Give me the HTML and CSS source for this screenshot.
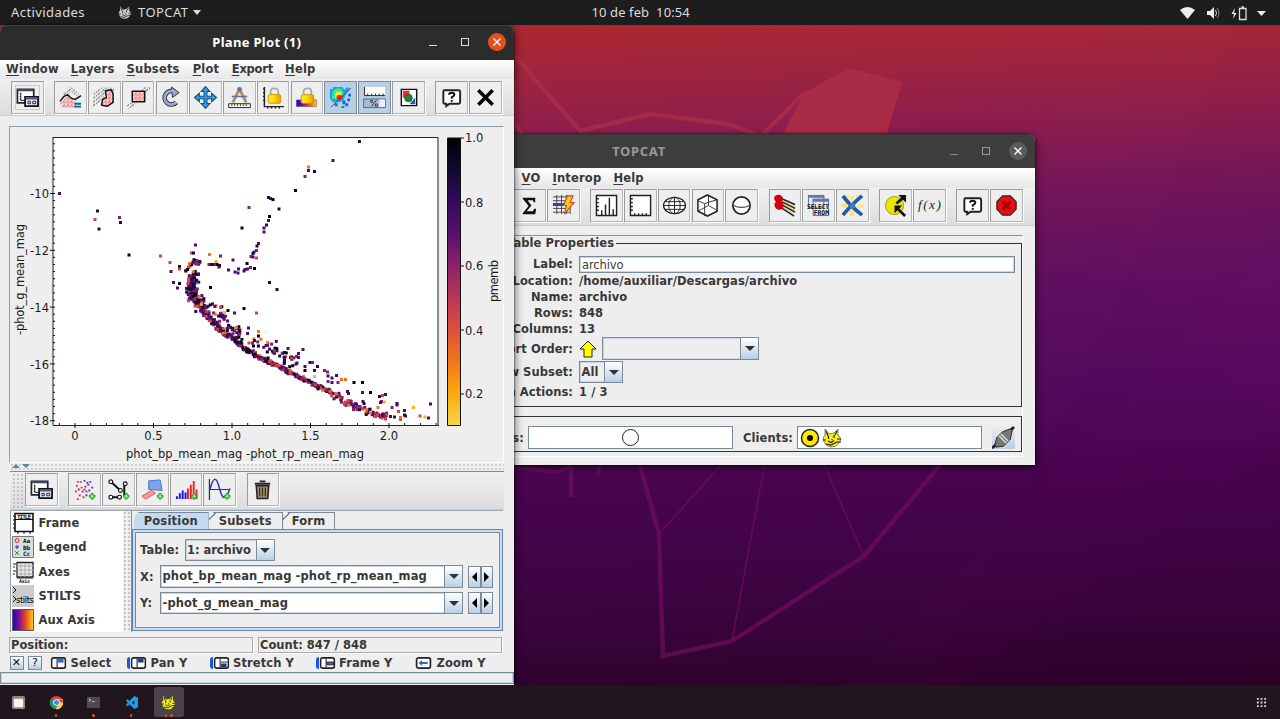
FILE: index.html
```html
<!DOCTYPE html>
<html lang="es">
<head>
<meta charset="utf-8">
<title>TOPCAT</title>
<link rel="stylesheet" href="styles.css">
</head>
<body>
<svg class="defs" width="0" height="0">
  <defs>
    <pattern id="red-dots" width="4" height="4" patternUnits="userSpaceOnUse"><path fill="#ee4350" d="M0 0h1.400v1.400h-1.400zM2 1h1.300v1.300h-1.300zM.8 2.700h1.300v1.300h-1.300z"/></pattern>
    <pattern id="grey-dots" width="5" height="4" patternUnits="userSpaceOnUse"><path fill="#444" d="M0 0h1.200v1.200h-1.200zM3 1.500h1.200v1.200h-1.200zM1 3h1v1h-1z"/></pattern>
    <linearGradient id="aux"><stop offset="0" stop-color="#1a00d8"/><stop offset=".3" stop-color="#7a1090"/><stop offset=".6" stop-color="#e04030"/><stop offset="1" stop-color="#ffd800"/></linearGradient>
    <linearGradient id="gold"><stop offset="0" stop-color="#ffe640"/><stop offset=".5" stop-color="#ffd800"/><stop offset="1" stop-color="#e0a000"/></linearGradient>
    <linearGradient id="inferno" x2="0" y2="1"><stop offset="0" stop-color="#000004"/><stop offset=".11" stop-color="#110a30"/><stop offset=".22" stop-color="#320a5e"/><stop offset=".33" stop-color="#57106e"/><stop offset=".44" stop-color="#8a226a"/><stop offset=".56" stop-color="#bc3754"/><stop offset=".67" stop-color="#dd513a"/><stop offset=".78" stop-color="#f37819"/><stop offset=".88" stop-color="#fca50a"/><stop offset="1" stop-color="#f6d746"/></linearGradient>
    <symbol id="windows" viewBox="0 0 24 24"><path d="M1.500 3.500h17v14h-17z" fill="#fff" stroke="#223" stroke-width="1.800"/><path d="M2 3h16v2.500H2z" fill="#446"/><path d="M5 7v8h5M4 8h1M4 11h1M4 14h1" fill="none" stroke="#111"/><path d="M9.500 11.500h13.500v9.500H9.500z" fill="#dde6f2" stroke="#112" stroke-width="1.900"/><path d="M10 11.500h12.500v2.500H10z" fill="#557"/><path d="M12.500 16h2.500v2.500h-2.500zM17.500 16h3v2.500h-3z" fill="#fff" stroke="#223"/></symbol>
    <symbol id="help" viewBox="0 0 24 24"><path d="M4.500 4.500h15q1.500 0 1.500 1.500v11q0 1.500-1.500 1.500H10L6.500 21v-2.500h-2Q3.500 18.500 3.500 17V6q0-1.500 1-1.500z" fill="#fff" stroke="#222" stroke-width="2"/><path d="M9.500 9Q9.500 7 12.200 7Q15 7 15 9.200Q15 10.600 12.300 11.600v1.700M12.300 14.500v2" fill="none" stroke="#111" stroke-width="2"/></symbol>
    <symbol id="plus" viewBox="0 0 8 8"><path d="M3 1h2v2h2v2H5v2H3V5H1V3h2z" fill="#8f8" stroke="#16a016" stroke-width="1"/></symbol>
    <symbol id="cat" viewBox="0 0 20 20"><path d="M3 1l4 5 5-1 4-4v6l3 4-2 4q-3 4.500-8 4-5-.5-7-5l-1-4 2-3z"/><path d="M4 3l2 5M15 3l-2 4M6.500 8v3M12 7v3M6 13l3 1.500 3-2M4 16l5 1 6-3M1 12h3M15 11h4M15 14h4M10 11v1" stroke="#222" stroke-width="1.200" fill="none"/></symbol>
    <symbol id="mouse" viewBox="0 0 17 13"><rect x="1" y="1" width="15" height="11" rx="2" fill="#fff" stroke="#222" stroke-width="1.800"/><path d="M7 2v9" stroke="#222" stroke-width="1.200"/></symbol>
  </defs>
</svg>

<div class="desktop">
  <svg class="wallpaper" viewBox="0 0 1280 719" fill="none">
    <path d="M1040 465 1165 200 1235 25h45v660H925z" fill="#30003a" opacity=".02"/>
    <path d="M845 685 1280 240v200L960 685z" fill="#a02070" opacity=".03"/>
    <path d="M1115 255l85-115 80 120v170z" fill="#a02070" opacity=".03"/>
    <path d="M783 133 805 92l44-24 53 14-15 51z" fill="#aa2b45"/>
    <g stroke="#b2304c" stroke-opacity=".6" stroke-width="4.500"><path d="M514 55 580 131l70-17 78 10 32 12M761 136l44-44M514 82v38l10 20" /></g>
    <g stroke="#760e62" stroke-opacity=".62" stroke-width="4.500"><path d="M639 462l20 72 4 122 69-15 132-85 76-91"/><path d="M514 468l45 4 14-7M571 465v32M599 465v10" stroke-width="4"/><path d="M659 534l63-70M765 462 732 641M823 462l41 94" stroke-width="1.700"/></g>
  </svg>

  <header class="topbar">
    <span class="activities">Actividades</span>
    <span class="app"><svg class="ic-cat" fill="#ccc"><use href="#cat"/></svg><span>TOPCAT</span><i class="caret"></i></span>
    <span class="clock">10 de feb&nbsp; 10:54</span>
    <svg class="tray" viewBox="0 0 90 16"><path d="M0 5Q7.500-1 15 5L7.500 14z" fill="#eee"/><path d="M27 6h3l4-4v12l-4-4h-3z" fill="#eee"/><path d="M35.500 5q2 3 0 6" fill="none" stroke="#ddd"/><path d="M37 3q4 5 0 10" fill="none" stroke="#888"/><path d="M55 3l-3.500 6h2.500l-1 5 3.500-6h-2.500z" fill="#eee"/><path d="M59.500 3.500h6.500v11h-6.500zM61.500 2h2.500" fill="none" stroke="#ddd" stroke-width="1.300"/><path d="M77 6h9l-4.500 5z" fill="#eee"/></svg>
  </header>

  <section class="window main-window">
    <div class="titlebar"><h2>TOPCAT</h2><div class="controls"><i class="min"></i><i class="max"></i><i class="close"><svg viewBox="0 0 8 8"><path d="M.5.500l7 7M7.500.500l-7 7"/></svg></i></div></div>
    <nav class="menu"><span><u>V</u>O</span><span><u>I</u>nterop</span><span><u>H</u>elp</span></nav>
    <div class="toolbar">
      <button><svg viewBox="0 0 24 24"><path d="M5 4h13v4.500h-1.500L15.500 6.500H10l4 5.500-5 6h6.500l1.500-2.500H19L18 21H5v-1l6-7.500L5 5z" fill="#111"/></svg></button>
      <button><svg viewBox="0 0 24 24"><path d="M1 3h18M1 7h18M1 15h17M1 19h17M5 1v20M10 1v20M15 1v20M19 1v20" stroke="#444"/><path d="M1 9.500h17v3H1z" fill="#3246a0"/><path d="M16 2h6l-3 7h4L13 21l2-9h-3z" fill="#ffc819" stroke="#c43" stroke-width="1.200"/></svg></button>
      <button class="gap"><svg viewBox="0 0 24 24"><path d="M1.500 1.500h21v21h-21z" fill="#fff" stroke="#222" stroke-width="1.500"/><path d="M2 5h2M2 9h2M2 13h2M2 17h2M7 22v-5M11 22V11M15 22V4M19 22v-6" stroke="#222" stroke-width="1.500"/></svg></button>
      <button><svg viewBox="0 0 24 24"><path d="M1.500 1.500h21v21h-21z" fill="#fff" stroke="#222" stroke-width="1.500"/><path d="M2 5h2M2 9h2M2 13h2M2 17h2M6 22v-2M10 22v-2M14 22v-2M18 22v-2" stroke="#222" stroke-width="1.500"/></svg></button>
      <button><svg viewBox="0 0 24 24"><g fill="none" stroke="#222"><ellipse cx="12" cy="12" rx="11.500" ry="8.500" fill="#fff" stroke-width="1.500"/><ellipse cx="12" cy="12" rx="6" ry="8.500"/><path d="M12 3v18M1 12h22M3 8h18M3 16h18"/></g></svg></button>
      <button><svg viewBox="0 0 24 24"><path d="M12 1l10 5v12l-10 5-10-5V6z" fill="#fff" stroke="#222" stroke-width="1.600"/><path d="M2 18l11-6 9 5M13 12V1M2 7l7 3 13-4M9 10v13" fill="none" stroke="#333"/></svg></button>
      <button><svg viewBox="0 0 24 24"><circle cx="12" cy="12" r="9" fill="#fff" stroke="#222" stroke-width="1.800"/><path d="M3.500 12q8.500 4 17 0" fill="none" stroke="#444" stroke-width="1.200"/></svg></button>
      <button class="gap"><svg viewBox="0 0 24 24"><path d="M9 5l14 6M9 8l14 7M9 11l14 8M8 14l14 9" stroke="#222" stroke-width="1.600"/><path d="M9 6.500l14 6.500M9 9.500l14 7.500M9 12.500l13 8.500" stroke="#dbc46a"/><path d="M2 2q5-3 8 1 1 3-1 5 4 3 1 7-3 3-7 0-3-4 0-7Q0 5 2 2z" fill="#d00010"/></svg></button>
      <button><svg viewBox="0 0 24 24"><path d="M1.500 1.500h16v13h-16zM6.500 5.500h16v17h-16z" fill="#e5e8f0" stroke="#5369a0"/><path d="M1 1h17v3H1zM6 5h17v3H6z" fill="#5e78ae"/><text x="0" y="16" textLength="23" lengthAdjust="spacingAndGlyphs" class="tiny sql">SELECT</text><text x="7" y="22" textLength="16" lengthAdjust="spacingAndGlyphs" class="tiny sql">FROM</text></svg></button>
      <button><svg viewBox="0 0 24 24"><path d="M4 2h4v4H4zM16 1h5v4h-5zM1 10h5v4H1zM18 11h5v3h-5zM10 2h3v5h-3zM9 17h5v6H9z" fill="#ffe050" opacity=".8"/><path d="M2 2q7 10 20 20M22 2Q12 10 2 22" stroke="#2459a8" stroke-width="3.800" fill="none"/><circle cx="12" cy="12" r="3" fill="#4679c0"/></svg></button>
      <button class="gap"><svg viewBox="0 0 24 24"><circle cx="11" cy="12" r="9.500" fill="#e8e600" stroke="#a7a000"/><path d="M13 10l8-7M14 15l8 8" stroke="#111" stroke-width="2.800"/><path d="M15 1h8v8zM11 12h8l-8 8z" fill="#111"/></svg></button>
      <button><svg viewBox="0 0 24 24"><text x="0" y="16" textLength="24" class="func">f(x)</text></svg></button>
      <button class="gap"><svg><use href="#help"/></svg></button>
      <button><svg viewBox="0 0 24 24"><path d="M8 2h8l6 6v8l-6 6H8l-6-6V8z" fill="#e01218" stroke="#501010" stroke-width="1.300"/><path d="M8 8l8 8M16 8l-8 8" stroke="#a80008" stroke-width="3.500"/></svg></button>
    </div>
    <div class="info">
      <fieldset>
        <legend>Table Properties</legend>
        <dl>
          <dt>Label:</dt><dd><span class="field">archivo</span></dd>
          <dt>Location:</dt><dd>/home/auxiliar/Descargas/archivo</dd>
          <dt>Name:</dt><dd>archivo</dd>
          <dt>Rows:</dt><dd>848</dd>
          <dt>Columns:</dt><dd>13</dd>
          <dt>Sort Order:</dt><dd><svg class="up" viewBox="0 0 18 18"><path d="M9 1l8 8h-4v8H5V9H1z" fill="#ff0" stroke="#222"/></svg><span class="combo sort"><span></span><b></b></span></dd>
          <dt>Row Subset:</dt><dd><span class="combo all"><span>All</span><b></b></span></dd>
          <dt>Activation Actions:</dt><dd>1 / 3</dd>
        </dl>
      </fieldset>
      <div class="samp">
        <span class="msg">Messages:</span><span class="box one"><i class="ring"></i></span>
        <span class="clients">Clients:</span><span class="box two"><svg viewBox="0 0 20 20"><circle cx="10" cy="10" r="8.500" fill="#ffe800" stroke="#222" stroke-width="1.500"/><circle cx="10" cy="10" r="3" /></svg><svg viewBox="0 0 20 20" fill="#f5ee20" stroke="#333" stroke-width=".6"><use href="#cat"/></svg></span>
        <svg class="plug" viewBox="0 0 24 24"><path d="M0 23l6-5M19 5l4-4" stroke="#222" stroke-width="3"/><path d="M5 12l6-6 8-3 2 2-2 9-7 7-8 1-1-3z" fill="#777" stroke="#222"/><path d="M9 8l8 8M7 10l8 8" stroke="#ddd" stroke-width="1.500"/></svg>
      </div>
    </div>
  </section>

  <section class="window plot-window">
    <div class="titlebar"><h2>Plane Plot (1)</h2><div class="controls"><i class="min"></i><i class="max"></i><i class="close"><svg viewBox="0 0 8 8"><path d="M.5.500l7 7M7.500.500l-7 7"/></svg></i></div></div>
    <nav class="menu"><span><u>W</u>indow</span><span><u>L</u>ayers</span><span><u>S</u>ubsets</span><span><u>P</u>lot</span><span class="export"><u>E</u>xport</span><span><u>H</u>elp</span></nav>
    <div class="toolbar">
      <button class="focus"><svg><use href="#windows"/></svg></button>
      <button class="gap"><svg viewBox="0 0 24 24"><path d="M3 8 12 0l9 8-3 3-5-5-7 5z" fill="url(#grey-dots)"/><path d="M1 17l8-7 8 7v6H3z" fill="url(#red-dots)"/><path d="M1 16l4-5 4-2 4 4 4 1 6-4" fill="none" stroke="#111" stroke-width="1.500"/><path d="M16 18.500h7M16 21.500h7" stroke="#076a85" stroke-width="2"/></svg></button>
      <button><svg viewBox="0 0 24 24"><path d="M1 7l9-6 12 1v4l-9 3-4 6-7 6H0z" fill="url(#grey-dots)"/><path d="M13 5l6-1 2 4v9l-6 4-6-1 1-6 4-2z" fill="#fdd"/><path d="M13 5l6-1 2 4v9l-6 4-6-1 1-6 4-2z" fill="url(#red-dots)" stroke="#111" stroke-width="1.500"/></svg></button>
      <button><svg viewBox="0 0 24 24"><path d="M16 1h8v4l-8 5zM0 20l7-5 2 4-7 5z" fill="url(#grey-dots)"/><path d="M5.500 5.500h13v11h-13z" fill="#fdd"/><path d="M5.500 5.500h13v11h-13z" fill="url(#red-dots)" stroke="#111" stroke-width="1.500"/></svg></button>
      <button><svg viewBox="0 0 24 24"><path d="M17 17a7 7 0 1 1-2-11" fill="none" stroke="#334" stroke-width="5"/><path d="M12 1l8 6-7 5z" fill="#99a0d4" stroke="#334"/><path d="M17 17a7 7 0 1 1-2-11" fill="none" stroke="#a0a6d8" stroke-width="3"/></svg></button>
      <button><svg viewBox="0 0 24 24"><path d="M12 .7l4.500 5h-3v5h5V7.500l5 4.500-5 4.500v-3.200h-5v5h3L12 23.300l-4.500-5h3v-5h-5v3.200L.5 12l5-4.500v3.200h5v-5h-3z" fill="#29a4ec" stroke="#105078" stroke-width="1.200"/></svg></button>
      <button><svg viewBox="0 0 24 24"><path d="M11 5 5 17M13 5l6 12" stroke="#b8914b" stroke-width="3"/><path d="M4 11h16" stroke="#66b" stroke-width="1.500"/><circle cx="12" cy="3.500" r="2.500" fill="#6670b0"/><path d="M.7 18.500h22.600v4H.7z" fill="#fff" stroke="#222"/><path d="M4 19v2M7 19v2M10 19v2M13 19v2M16 19v2M19 19v2" stroke="#222"/></svg></button>
      <button><svg viewBox="0 0 24 24"><path d="M2.500 1v20.500H23M1 3h2M1 7h2M1 11h2M1 15h2M6 22v1.500M10 22v1.500M14 22v1.500M18 22v1.500" stroke="#222" stroke-width="1.500" fill="none"/><path d="M9 9V6q0-3.500 4-3.500t4 3.500v3" fill="none" stroke="#aaa" stroke-width="2"/><rect x="6.500" y="9" width="13" height="9" rx="1.500" fill="url(#gold)" stroke="#c89500"/></svg></button>
      <button><svg viewBox="0 0 24 24"><path d="M1.500 14.500h21v7h-21z" fill="url(#aux)" stroke="#444" stroke-width=".5"/><path d="M9 9V6q0-3.500 4-3.500t4 3.500v3" fill="none" stroke="#aaa" stroke-width="2"/><rect x="6.500" y="9" width="13" height="9" rx="1.500" fill="url(#gold)" stroke="#c89500"/></svg></button>
      <button class="on"><svg viewBox="0 0 24 24"><path d="M1 3h3V1h10l2 3 3-3 3 2-4 5-3 7-4 2H4L1 13z" fill="#10a9f4"/><path d="M4 5q5-5 10-1l1 5-5 6-7-2z" fill="#38e68d"/><path d="M7 6h6v6H6z" fill="#ffe72b"/><path d="M8 10l4-1 3 2-3 4-4-1z" fill="#f32810"/><path d="M2 22l21-20" stroke="#333" stroke-width=".8"/><path d="M14 15h3v3h3v3h-3v-2h-3zM19 13h3v3h-3zM6 18h3v3H6zM20 8h3v3h-3zM13 21h3v2h-3z" fill="#1268e8"/></svg></button>
      <button class="on"><svg viewBox="0 0 24 24"><path d="M1 1h22v9H1z" fill="#fff"/><path d="M1.500 1v9H23M5 10V8M9 10V8M13 10V8M17 10V8M21 10V8" stroke="#222" fill="none"/><path d="M.7 13.500h22.600v9H.7z" fill="#a9bed5" stroke="#567"/><path d="M17 14h6v8h-6z" fill="#eef"/><path d="M9 21l5-6" stroke="#222"/><circle cx="9" cy="16" r="1.300" fill="none" stroke="#222"/><circle cx="14" cy="20" r="1.300" fill="none" stroke="#222"/></svg></button>
      <button><svg viewBox="0 0 24 24"><path d="M4.500 3.500h16v17h-16z" fill="#fff" stroke="#111" stroke-width="1.500"/><path d="M6 5h7v7H6z" fill="#ef3038"/><path d="M13 19l6-7v7z" fill="#1e5fa8"/><circle cx="12" cy="12.500" r="4" fill="#188a38" stroke="#333" stroke-width=".7"/></svg></button>
      <button class="gap"><svg><use href="#help"/></svg></button>
      <button><svg viewBox="0 0 24 24"><path d="M4.500 4.500l15 15M19.500 4.500l-15 15" stroke="#000" stroke-width="3.600"/></svg></button>
    </div>

    <div class="plot">
      <svg id="chart" viewBox="10 127 493 336">
        <path d="M53 137.500h385v288H53z" fill="#fff"/>
        <g id="points"></g>
        <path d="M53 137.500h385v288M53 137v288.500h386" fill="none" stroke="#222"/>
        <path id="ticks" stroke="#111" fill="none"/>
        <path d="M447.500 138h13v287.500h-13z" fill="url(#inferno)" stroke="#111"/>
        <g text-anchor="end"><text x="49" y="198" textLength="19">-10</text><text x="49" y="255" textLength="19">-12</text><text x="49" y="311.500" textLength="19">-14</text><text x="49" y="368.500" textLength="19">-16</text><text x="49" y="425" textLength="19">-18</text></g>
        <g text-anchor="middle"><text x="75" y="440">0</text><text x="153.500" y="440">0.5</text><text x="232" y="440">1.0</text><text x="310.500" y="440">1.5</text><text x="389" y="440">2.0</text></g>
        <g><text x="465" y="142">1.0</text><text x="465" y="206.500">0.8</text><text x="465" y="270">0.6</text><text x="465" y="334.500">0.4</text><text x="465" y="398">0.2</text></g>
        <text x="126" y="458" textLength="238">phot_bp_mean_mag -phot_rp_mean_mag</text>
        <text transform="translate(23.500 335) rotate(-90)" textLength="111">-phot_g_mean_mag</text>
        <text transform="translate(498 302) rotate(-90)" textLength="42">pmemb</text>
      </svg>
    </div>
    <div class="splitter"><i></i><i></i></div>
    <div class="toolbar layer-bar">
      <span class="grip"></span>
      <button><svg><use href="#windows"/></svg></button>
      <button class="gap"><svg viewBox="0 0 24 24"><path d="M3 7h2v2H3zM7 3h2v2H7zM2 13h2v2H2zM8 9h2v2H8zM6 17h2v2H6zM13 13h2v2h-2zM10 19h2v2h-2zM15 6h2v2h-2zM4 21h2v2H4zM4 3h2v2H4zM11 11h2v2h-2z" fill="#e33"/><path d="M11 2h2v2h-2zM17 3h2v2h-2zM12 8h2v2h-2zM19 9h2v2h-2zM9 13h2v2H9zM16 12h2v2h-2zM5 11h2v2H5zM13 17h2v2h-2zM14 4h2v2h-2z" fill="#44d"/><use href="#plus" x="16" y="15" width="8" height="8"/></svg></button>
      <button><svg viewBox="0 0 24 24"><path d="M4 4l10 9M18 7v11M4 20h9" stroke="#111" stroke-width="2"/><g fill="#fff" stroke="#111" stroke-width="1.200"><circle cx="4" cy="4" r="2"/><circle cx="14" cy="13" r="2"/><circle cx="19" cy="6" r="2"/><circle cx="4" cy="20" r="2"/><circle cx="13" cy="20" r="2"/></g><use href="#plus" x="16" y="15" width="8" height="8"/></svg></button>
      <button><svg viewBox="0 0 24 24"><path d="M8 3l12-1 2 11-14-1z" fill="#7ea2ec" stroke="#4771d4"/><path d="M1 19l10-6 4 3-10 6z" fill="#f99" stroke="#d55"/><use href="#plus" x="16" y="15" width="8" height="8"/></svg></button>
      <button><svg viewBox="0 0 24 24"><path d="M2 22v-3M5 22v-6M8 22v-9M11 22v-7" stroke="#11e" stroke-width="2"/><path d="M13.500 22v-11M16.500 22V7M19.500 22V3M22.500 22V12" stroke="#e22" stroke-width="2"/><use href="#plus" x="16" y="15" width="8" height="8"/></svg></button>
      <button><svg viewBox="0 0 24 24"><path d="M1.500 1v22M1 12h22" stroke="#333" stroke-width="1.300"/><path d="M2 12C6-3 9-1 12 11S18 24 23 11" fill="none" stroke="#33c" stroke-width="1.600"/><use href="#plus" x="16" y="15" width="8" height="8"/></svg></button>
      <button class="gap"><svg viewBox="0 0 24 24"><path d="M5.500 8h13l-1 13.500h-11z" fill="#a28b70" stroke="#222" stroke-width="1.600"/><path d="M9 10v9M12 10v9M15 10v9" stroke="#332" stroke-width="1.300"/><path d="M4 6h16M9 3.500h6" stroke="#222" stroke-width="2"/></svg></button>
    </div>
    <div class="lower">
      <ul class="layers">
        <li><svg viewBox="0 0 22 22"><path d="M3 1.500h18v18H3z" fill="#fff" stroke="#111" stroke-width="1.600"/><path d="M3 7.500h18M1 4h2M1 8h2M1 12h2M1 16h2M6 20v2M12 20v2M18 20v2" stroke="#111"/><text x="5" y="6.500" textLength="14" class="tiny">TITLE</text></svg>Frame</li>
        <li><svg viewBox="0 0 22 22"><path d="M.5.500h21v21H.5z" fill="#ddd" stroke="#777"/><circle cx="5" cy="4.500" r="2" fill="none" stroke="#e22"/><path d="M5 9v4M3 11h4" stroke="#22d"/><path d="M3 15l4 4M7 15l-4 4" stroke="#2a2"/><text x="11" y="7" class="tiny">Aa</text><text x="11" y="13.500" class="tiny">Bb</text><text x="11" y="20" class="tiny">Cc</text></svg>Legend</li>
        <li><svg viewBox="0 0 22 22"><path d="M5 1.500h16V16H5z" fill="#eee" stroke="#222" stroke-width="1.300"/><path d="M9 2v14M13 2v14M17 2v14M5 5h16M5 9h16M5 13h16" stroke="#aaa"/><path d="M1 3h3M1 6h2M1 10h3M1 13h2M5 17h16" stroke="#222"/><text x="7" y="22" textLength="11" class="tiny axis">Axis</text></svg>Axes</li>
        <li><svg viewBox="0 0 22 22"><path d="M0 0h22v22H0z" fill="#ccc"/><path d="M1 2l3 3-3 3M1 11l3 3-3 3" fill="none" stroke="#111"/><text x="4" y="18" textLength="18" class="stilts">stilts</text></svg>STILTS</li>
        <li><svg viewBox="0 0 22 22"><path d="M.5.500h21v21H.5z" fill="url(#aux)" stroke="#555"/></svg>Aux Axis</li>
      </ul>
      <span class="grip"></span>
      <div class="tabs">
        <div class="heads"><span class="active">Position</span><span>Subsets</span><span>Form</span></div>
        <div class="tabbody">
          <div class="line"><label>Table:</label><span class="combo table"><span>1: archivo</span><b></b></span></div>
          <div class="line"><label>X:</label><span class="combo edit"><span>phot_bp_mean_mag -phot_rp_mean_mag</span><b></b></span><span class="spin"><i class="l"></i><i class="r"></i></span></div>
          <div class="line"><label>Y:</label><span class="combo edit"><span>-phot_g_mean_mag</span><b></b></span><span class="spin"><i class="l"></i><i class="r"></i></span></div>
        </div>
      </div>
    </div>
    <div class="status"><span>Position:</span><span>Count: 847 / 848</span></div>
    <div class="hints">
      <i>✕</i><i>?</i>
      <span><svg viewBox="0 0 17 13"><use href="#mouse"/><path d="M8 2h6v4H8z" fill="#2864e0"/></svg>Select</span>
      <span class="wheel"><svg viewBox="0 0 17 13"><use href="#mouse"/><path d="M8 2h6v4H8z" fill="#1e3c8c"/></svg>Pan Y</span>
      <span class="wheel"><svg viewBox="0 0 17 13"><use href="#mouse"/><path d="M8 7h6v4H8z" fill="#1e3c8c"/><path d="M8 5.500h7" stroke="#222"/></svg>Stretch Y</span>
      <span class="wheel"><svg viewBox="0 0 17 13"><use href="#mouse"/><path d="M8 5.500h7v3H8z" fill="#3964c0" stroke="#222"/></svg>Frame Y</span>
      <span class="zoomy"><svg viewBox="0 0 17 13"><rect x="1" y="1" width="15" height="11" rx="2" fill="#fff" stroke="#222" stroke-width="1.800"/><path d="M3 6.500l4-3v2h6v2H7v2z" fill="#2864e0"/></svg>Zoom Y</span>
    </div>
    <div class="progress"></div>
  </section>

  <footer class="dock">
    <span><svg viewBox="0 0 16 16"><rect x="1" y="1" width="14" height="14" rx="2" fill="#8d877f"/><rect x="3" y="4" width="10" height="9" rx="1" fill="#f8f5ed"/></svg></span>
    <span><svg viewBox="0 0 16 16"><circle cx="8" cy="8" r="7" fill="#db4437"/><path d="M8 8 2 4.500A7 7 0 0 0 7 15l3-4z" fill="#12a05b"/><path d="M8 8h6.500Q16 4.500 14 4.500H8zM8 5h6.300A7 7 0 0 1 7 15l4-6z" fill="#ffd04a"/><circle cx="8" cy="8" r="3.500" fill="#fff"/><circle cx="8" cy="8" r="2.700" fill="#4285f4"/></svg><i></i></span>
    <span><svg viewBox="0 0 16 16"><path d="M1 2h14v12H1z" fill="#4c4b4b"/><path d="M3 4l2 1.500L3 7M6.500 7H9" fill="none" stroke="#ddd"/></svg><i></i></span>
    <span><svg viewBox="0 0 16 16"><path d="M11 1l4 2v10l-4 2-9-9 1.500-1.500L11 10V6l-7.500 6L2 10.500z" fill="#209be5"/></svg><i></i></span>
    <span class="active"><svg viewBox="0 0 20 20" fill="#f2ee18"><use href="#cat"/></svg><i></i><i></i></span>
    <svg class="grid" viewBox="0 0 12 12"><path d="M1 1h2v2H1zM5 1h2v2H5zM9 1h2v2H9zM1 5h2v2H1zM5 5h2v2H5zM9 5h2v2H9zM1 9h2v2H1zM5 9h2v2H5zM9 9h2v2H9z" fill="#ddd"/></svg>
  </footer>
</div>
<script src="chart.js"></script>
</body>
</html>
```
FILE: styles.css
```css
* { box-sizing: border-box; }
body { margin: 0; overflow: hidden; font: bold 11.5px/16px "DejaVu Sans", sans-serif; letter-spacing: .1px; color: #383838; }
.defs { position: absolute; }
.desktop { position: relative; width: 1280px; height: 719px; overflow: hidden; display: flex; flex-direction: column; justify-content: space-between;
  background: linear-gradient(178deg, #b0292b 4%, #a4263a 10%, #8d1e4c 20%, #72165a 30%, #5f0f60 42%, #540a5c 55%, #48044f 68%, #3b043f 83%, #2b0226 96%); }
.wallpaper { position: absolute; width: 1280px; height: 719px; }
svg { display: block; flex: none; }

.topbar { position: relative; height: 25px; background: #1d1d1d; color: #dcdcdc; display: flex; align-items: center; font: 13px/25px "Noto Sans", sans-serif; letter-spacing: .1px; padding: 0 11px; }
.activities { letter-spacing: .42px; width: 107px; }
.app { display: flex; align-items: center; letter-spacing: .45px; }
.ic-cat { width: 14px; height: 15px; margin-right: 6px; }
.caret { border: 4.500px solid transparent; border-top: 5px solid #ddd; border-bottom: 0; margin-left: 4px; }
.clock { position: absolute; left: 591.500px; white-space: nowrap; }
.tray { width: 90px; height: 16px; margin-left: auto; margin-right: -1px; }

.window { position: absolute; background: #eee; box-shadow: 0 0 2px #000, 1px 3px 9px rgba(0,0,0,.55); border-radius: 7px 7px 0 0; overflow: hidden; }
.main-window { left: 420px; top: 134px; width: 614.500px; height: 331px; }
.plot-window { left: 0; top: 25px; width: 513.500px; height: 660px; }
.titlebar { height: 35px; background: #2c2c2c; color: #fff; position: relative; border-top: 1px solid #3b3b3b; }
.titlebar h2 { margin: 0; text-align: center; font: bold 13px/33px "Noto Sans", sans-serif; letter-spacing: .3px; }
.main-window .titlebar { height: 34px; background: #3d3d3d; color: #999; }
.main-window h2 { width: 438px; line-height: 32px; letter-spacing: .7px; }
.controls { position: absolute; right: 8px; top: 0; height: 32px; display: flex; align-items: center; }
.controls i { display: block; }
.min { width: 8px; height: 1.500px; background: #ddd; margin-top: 7px; margin-right: 24px; }
.max { width: 8px; height: 8px; border: 1.300px solid #ddd; margin-right: 19px; }
.close { width: 18px; height: 18px; border-radius: 50%; background: #e2501f; display: grid !important; place-items: center; }
.close svg { width: 8px; height: 8px; stroke: #fff; stroke-width: 1.300; fill: none; }
.main-window .close { background: #5b5b5b; }
.main-window .min { background: #888; }
.main-window .max { border-color: #999; }

.menu { height: 19px; background: linear-gradient(#fff, #e6e6e6); display: flex; gap: 12px; padding: 1px 6px; letter-spacing: .2px; }
.plot-window .menu span:nth-child(4) { margin-left: 1px; margin-right: .5px; }
.menu .export { letter-spacing: -.2px; }
.main-window .menu { padding-left: 101.500px; height: 20px; padding-top: 2px; }
.menu u { text-underline-offset: 2px; }
.toolbar { height: 37px; display: flex; gap: 1.200px; padding: 2px 11px 0; background: linear-gradient(#f0f0f0, #dcdcdc); border-bottom: 1px solid #ccc; }
.main-window .toolbar { padding-left: 93.300px; height: 38px; padding-top: 1px; }
button { width: 32.600px; height: 32.600px; flex: none; padding: 0; display: grid; place-items: center; background: #eee; border: 1px solid #9b9b9b; border-right-color: #b5b5b5; border-bottom-color: #b5b5b5; box-shadow: 1px 1px 0 #fff; }
button svg { width: 23px; height: 23px; }
button.gap { margin-left: 9.400px; }
button.on { background: #b8cfe5; border-color: #7a8a99; }
button.focus svg { outline: 1px solid #b8cfe5; }
.tiny { font: bold 6px "DejaVu Sans Mono", monospace; fill: #111; letter-spacing: 0; }
.sql { font-size: 7px; }
.axis { font-size: 5px; }
.func { font: italic 14px "Liberation Serif", serif; fill: #222; letter-spacing: 0; }
.stilts { font: 8.500px "DejaVu Sans", sans-serif; letter-spacing: 0; }

.plot { margin: 10px 10px 0 9px; height: 337px; border: 1px solid #8b9cab; border-right-color: #fff; border-bottom-color: #fff; }
#chart { width: 493px; height: 336px; font: 11.500px "DejaVu Sans", sans-serif; letter-spacing: 0; fill: #1a1a1a; }
.splitter { height: 8px; margin: 0 10px; background: radial-gradient(#aaa .6px, transparent .8px) 0 0 / 4px 4px; display: flex; gap: 2px; padding: 1px 2px; }
.splitter i { border: 4.500px solid transparent; border-bottom: 4px solid #6382a8; border-top: 0; height: 0; }
.splitter i + i { border-top: 4px solid #6382a8; border-bottom: 0; }
.layer-bar { height: 39px; margin: 0 10px; padding: 1px 0 0 2px; border-top: 1px solid #7a8a99; }
.grip { width: 12px; background: radial-gradient(#999 .6px, transparent .8px) 0 0 / 4px 4px; }
.layer-bar .grip { height: 35px; }
.lower { display: flex; height: 122px; margin: 0 11px 0 10px; border-top: 1px solid #9aa8b5; }
.layers { list-style: none; margin: 0; padding: 0 0 0 1px; width: 113px; background: #fff; border-left: 1px solid #8b9cab; font-size: 11.500px; }
.layers li { height: 24.300px; display: flex; align-items: center; gap: 4.500px; }
.layers svg { width: 22px; height: 22px; }
.lower > .grip { width: 8px; }
.tabs { flex: 1; border-left: 1px solid #7a8a99; padding-top: 1px; }
.heads { display: flex; height: 17px; padding-left: 2px; letter-spacing: .2px; }
.heads span { border: 1px solid #7a8a99; border-bottom: 0; border-left-width: 0; width: 74.500px; text-align: center; line-height: 16px; clip-path: polygon(5px 0, 100% 0, 100% 100%, 0 100%, 0 5px); background: linear-gradient(135deg, transparent 4px, #7a8a99 4px 5px, #eee 5px); }
.heads span:last-child { width: 52px; }
.heads .active { background: #c5daf0; }
.tabbody { border: 1px solid #6382a8; box-shadow: inset 0 0 0 2px #c8ddf2, inset 0 0 0 3px #7a8a99; height: 102px; padding: 9px 7px; }
.line { display: flex; align-items: center; height: 22px; margin-bottom: 4.500px; }
.line label { width: 20px; }
.line:first-child label { width: 44.500px; }
.combo { display: flex; height: 22.500px; border: 1px solid #7a8a99; box-shadow: inset 0 0 0 1px #c8d6e3; white-space: nowrap; flex: none; }
.combo > span { flex: 1; padding-left: 1.500px; line-height: 20px; }
.combo b { width: 18px; border-left: 1px solid #7a8a99; background: linear-gradient(#fff, #b8cfe5); display: grid; place-items: center; }
.combo b::after { content: ""; border: 5px solid transparent; border-top-color: #333; border-bottom: 0; }
.combo.table { width: 90px; letter-spacing: -.05px; }
.combo.edit { width: 303px; background: #fff; letter-spacing: .11px; }
.spin { display: flex; margin-left: 5px; }
.spin i { width: 12.500px; height: 22px; border: 1px solid #7a8a99; background: linear-gradient(#fff, #b8cfe5); display: grid; place-items: center; }
.spin i::after { content: ""; border: 5px solid transparent; border-left-width: 0; border-right: 5px solid #000; }
.spin .r::after { border-right-width: 0; border-left: 5px solid #000; }
.status { display: grid; grid-template-columns: 244px 244px; gap: 5px; padding: 5px 0 0 9px; }
.status span { height: 16px; border: 1px solid #aaa; line-height: 15px; padding-left: 1px; box-shadow: 1px 1px 0 #fff; letter-spacing: 0; }
.hints { display: grid; grid-template-columns: 18.500px 22px 77px 82.500px 106px 99px 90px; padding-left: 9.500px; height: 19px; align-items: center; }
.hints span { display: flex; align-items: center; gap: 3.500px; white-space: nowrap; letter-spacing: .1px; }
.hints .zoomy { gap: 5px; }
.hints span svg { width: 17px; height: 12px; }
.hints .wheel svg { border-left: 3px solid #1656e8; width: 20px; border-radius: 3px; }
.hints i { width: 14px; height: 14px; border: 1px solid #7a8a99; background: linear-gradient(#fff, #b8cfe5); font: bold 11px/12px "DejaVu Sans", sans-serif; text-align: center; color: #111; }
.hints i + i { font-weight: normal; }
.progress { height: 12px; border: 1px solid #7a8a99; box-shadow: inset 0 0 0 1px #c8d6e3; }

.info { margin: 9px 12px 0; border-top: 1px solid #8795a3; border-right: 1px solid #fff; height: 222px; border-bottom: 1px solid #fff; }
fieldset { margin: 0; padding: 0; height: 171px; border: 1px solid #333; width: 590px; }
legend { padding: 0 2px 0 0; margin-left: 74px; line-height: 14px; letter-spacing: .08px; }
dl { margin: 5px 0 0; padding: 0; display: grid; grid-template-columns: 140px 1fr; column-gap: 6px; grid-template-rows: 18px 16px 16px 16px 16px 23px 24px 15px; align-items: center; letter-spacing: .06px; }
dt { text-align: right; white-space: nowrap; }
dd { margin: 0; display: flex; align-items: center; }
.field { background: #fff; border: 1px solid #7a8a99; box-shadow: inset 0 0 0 1px #c8d6e3; font-weight: normal; letter-spacing: -.1px; height: 17px; line-height: 16px; padding-left: 2px; width: 436px; }
.up { width: 18px; height: 18px; margin-right: 5px; }
.sort { width: 157px; }
.all { width: 44px; }
.samp { border: 1px solid #333; height: 36px; width: 590px; margin-top: 9px; display: flex; align-items: center; padding-top: 7px; }
.msg { width: 91px; text-align: right; }
.box { height: 23px; background: #fff; border: 1px solid #7a8a99; display: flex; align-items: center; }
.one { width: 205px; margin-left: 4px; justify-content: center; }
.ring { width: 17px; height: 17px; border: 1px solid #222; border-radius: 50%; }
.clients { margin-left: 10px; width: 54px; }
.two { width: 185px; padding-left: 2px; gap: 2px; }
.two svg { width: 20px; height: 20px; }
.plug { width: 23px; height: 23px; margin-left: 10px; background: linear-gradient(#eee, #b8cfe5); }

.dock { position: relative; height: 34px; background: #21151e; display: flex; align-items: center; padding: 0 3.500px; gap: 7.500px; }
.dock > span { width: 30px; height: 30px; border-radius: 3px; display: flex; justify-content: center; align-content: flex-start; gap: 3px; flex-wrap: wrap; }
.dock > span svg { width: 15px; height: 15px; margin: 8px 7px 1px; }
.dock i { width: 2.500px; height: 2.500px; background: #d45129; border-radius: 50%; }
.dock .active { background: #4b4148; }
.dock .grid { margin-left: auto; margin-right: 10px; width: 11px; height: 11px; }
```
FILE: chart.js
```js
// Inferno-like ramp used for the membership probability.
const ramp = { k: '#07030f', d: '#1b0c41', p: '#4a0c6b', m: '#83206b', r: '#cf4446', o: '#f1731d', y: '#fbb61a' };

// Isolated stars: "x y colour" in chart coordinates.
const stars = `59.5 193.5 p,97.5 211 d,95 219.500 r,119.500 217.500 m,120.500 222.500 d,99 229 d,129 255 k,160.500 256 r,170 262.500 r,
295.500 190.500 k,268.500 197.500 d,270.500 198.500 p,273 199.500 k,279 209 d,249 207.500 m,269.500 216.500 k,268.500 220.500 p,266.500 225 d,264 228 p,264 232 p,
258.500 243.500 p,257 246 d,256.500 250.500 m,254 252 p,253 253.500 d,251 256.500 m,253 257 p,256.500 258 r,242 228 k,233 260 p,247 263.500 k,250.500 267.500 m,
245 269.500 p,247.500 269 p,254.500 268.500 k,244 271 p,238.500 269 p,238 273 p,235 272 p,228.500 270 p,219 267 p,219.500 265.500 d,220.500 256 m,216 261.500 y,209.500 254.500 o,
209 264.500 m,211.500 264.500 d,214 264.500 p,217 264.500 k,195.500 245 p,191.500 253 r,193.500 253 d,179.500 266.500 k,179.500 269 r,171 271.500 p,173.500 282.500 p,179.500 283.500 k,177.500 288 p,
198.500 274 p,210.500 287.500 k,269.500 282.500 d,277 289.500 d,244 308.500 k,256.500 313 r,228 310.500 k,234.500 313 p,220.500 307.500 r,224.500 312.500 y,248.500 328 p,258.500 336 k,303 349.500 p,
359.500 141.500 d,333 160.500 p,308.500 167 o,308.500 170.500 p,314.500 171.500 d,305 176.500 m,298.500 353.500 p,288 348.500 p,284.500 352.500 d,284.500 360 d,298.500 357.500 p,297 363 p,
305 366.500 p,305 370.500 k,310 362.500 d,312.500 362.500 m,317.500 366.500 d,324.500 370.500 m,327.500 372 m,314.500 370.500 p,336.500 375.500 p,332 378 p,328 376 p,341.500 379.500 o,345.500 379.500 o,
354 382.500 k,362.500 382.500 k,338 382.500 m,332 382.500 p,328 381.500 m,370.500 392.500 k,362.500 392.500 p,385.500 394.500 p,382.500 395.500 r,379.500 396.500 d,381.500 401.500 m,384.500 402 y,380.500 402.500 p,
347.500 391.500 p,348.500 393.500 p,363 401.500 p,364 403.500 d,378 407.500 o,392 407.500 m,397 403.500 p,397 405 p,404.500 410.500 p,413.500 407.500 y,430.500 404 p,398.500 411.500 r,394.500 417 p,
404.500 415 d,405.500 416 p,420 416 r,425 417 y,428.500 418 p,400.500 419.500 r,400.500 417.500 o,390.500 416.500 p,385.500 416.500 m,385.500 419 r,382.500 415 p,314.500 376.500 y,241 342 k,253.500 346 k,268 358 k`;

const out = [];
const dot = (x, y, c) => out.push(`<rect x="${(x - 1.5).toFixed(1)}" y="${(y - 1.5).toFixed(1)}" width="3" height="3" fill="${ramp[c]}"/>`);

let seed = 7;
const rnd = () => (seed = (seed * 16807) % 2147483647) / 2147483647;
const gauss = () => rnd() + rnd() + rnd() - 1.5;
const pick = s => s[Math.floor(rnd() * s.length)];

// Scatters n stars along a polyline with the given spread across it.
function along(line, n, sx, sy, colours) {
  for (let i = 0; i < n; i++) {
    const t = rnd() * (line.length - 1), k = Math.floor(t), f = t - k;
    dot(line[k][0] + (line[k + 1][0] - line[k][0]) * f + gauss() * sx,
        line[k][1] + (line[k + 1][1] - line[k][1]) * f + gauss() * sy, pick(colours));
  }
}
along([[186, 271], [191, 266], [194, 262], [199, 263]], 32, 2, 2, 'kddpmrro');
along([[194, 275], [192, 283], [192, 291], [195, 299], [202, 308]], 155, 4.5, 4, 'kkdddpppmro');
along([[201, 307], [209, 319], [219, 328], [231, 337], [246, 349], [260, 358]], 165, 3.4, 3.2, 'kkddpppmmror');
along([[202, 298], [211, 308], [223, 319], [233, 329], [243, 337]], 46, 8, 6, 'kddppppmoy');
along([[260, 358], [273, 364], [293, 374], [313, 384], [333, 393]], 190, 1.5, 1.9, 'kddpppmmrror');
along([[333, 393], [348, 402], [360, 409], [373, 413], [386, 416]], 85, 3.5, 3.5, 'dppmmrrro');
along([[243, 333], [262, 344], [279, 353], [299, 366]], 44, 9, 8, 'kdpppmmro');
stars.split(',').forEach(s => { const [x, y, c] = s.trim().split(' '); dot(+x, +y, c); });
document.getElementById('points').innerHTML = out.join('');

let ticks = '';
for (let i = -7; i <= 32; i++) {
  const y = 193.5 + i * 7.1;
  ticks += `M${i % 8 === 0 ? 50 : 53} ${y}H55`;
}
for (let i = -1; i <= 23; i++) {
  const x = 75 + i * 15.7;
  ticks += `M${x} 423V${i % 5 === 0 ? 428 : 425}`;
}
for (let i = 0; i < 5; i++) ticks += `M460 ${138 + i * 64}H464`;
document.getElementById('ticks').setAttribute('d', ticks);
```
